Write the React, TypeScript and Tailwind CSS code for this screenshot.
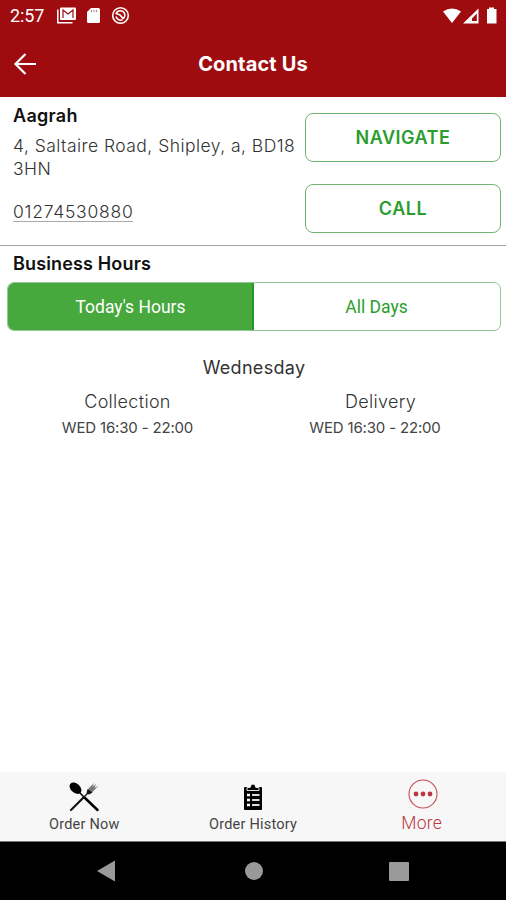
import React from "react";

const body = "font-['Inter','Liberation_Sans',sans-serif] whitespace-nowrap";
const roboto = "font-['Roboto','Liberation_Sans',sans-serif] whitespace-nowrap";

function StatusBar() {
  return (
    <div className="flex h-[31px] items-center px-[10px] text-white">
      <span className={`${roboto} w-[47px] text-[18px] leading-[31px] tracking-[-0.1px]`}>2:57</span>
      <svg className="h-[17px] w-[20px]" viewBox="0 0 20 17">
        <path d="M0.800 2.500V15.700H15.500" fill="none" stroke="#fff" strokeWidth="1.500" />
        <rect x="3" y="0.500" width="16" height="12.500" rx="1" fill="#fff" />
        <path d="M6 11V3L11 7L16 3V11" fill="none" stroke="#9e0c10" strokeWidth="1.200" />
      </svg>
      <svg className="ml-[9px] h-[17px] w-[15px]" viewBox="0 0 15 17">
        <path d="M5 1H12.500Q14 1 14 2.500V14.500Q14 16 12.500 16H2.500Q1 16 1 14.500V5Z" fill="#fff" />
        <path d="M5.500 3V5M8 3V5M10.500 3V5" stroke="#9e0c10" strokeWidth="0.900" opacity=".65" />
      </svg>
      <svg className="ml-[10px] h-[19px] w-[19px]" viewBox="0 0 19 19">
        <circle cx="9.500" cy="9.500" r="7.800" fill="none" stroke="#fff" strokeWidth="1.600" />
        <path d="M5.200 7.500C6.500 3.800 12 3.800 13.500 7.500C14.500 10 13 12 12 12.500L9 9C7.500 8 6 8 5.200 7.500Z" fill="none" stroke="#fff" strokeWidth="1.700" />
        <path d="M5 10.500C6 14 9 14.800 11.500 13.800" fill="none" stroke="#fff" strokeWidth="1.600" />
      </svg>
      <svg className="ml-auto h-[18px] w-[56px] translate-x-[2px]" viewBox="0 0 56 18">
        <path d="M1 4.500Q10 -1.500 19 4.500L10 16Z" fill="#fff" />
        <path d="M21 16.500L36.500 1.500V16.500ZM28.500 15H30V11.500L34.800 6.500V14H30V15Z" fill="#fff" fillRule="evenodd" />
        <path d="M45 2H47V0.500H52V2H54.500V16.500H45Z" fill="#fff" />
      </svg>
    </div>
  );
}

function Header() {
  return (
    <header className="h-[97px] bg-[#9e0c10]">
      <StatusBar />
      <div className="grid h-[65px] grid-cols-[70px_1fr_70px] items-center text-white">
        <svg className="ml-[13px] h-[24px] w-[24px]" viewBox="0 0 24 24" fill="none" stroke="#fff" strokeWidth="2.200">
          <path d="M12.500 2L2.500 12L12.500 22M2.500 12H23" />
        </svg>
        <h1 className={`${body} text-center text-[20px] leading-6 font-bold tracking-[0.15px]`}>Contact Us</h1>
      </div>
    </header>
  );
}

function OutlineButton({ children }: { children: React.ReactNode }) {
  return (
    <button className={`${body} h-[49px] w-[196px] rounded-[8px] border border-[#6fb574] text-[18px] font-semibold tracking-[0.5px] text-[#2a9d2d]`}>
      {children}
    </button>
  );
}

function Hours({ title, time }: { title: string; time: React.ReactNode }) {
  return (
    <div className="flex-1 text-center">
      <div className={`${body} pl-[2px] text-[18px] leading-[26px] font-light tracking-[0.3px] text-[#333]`}>{title}</div>
      {time}
    </div>
  );
}

export default function App() {
  return (
    <div className="flex h-[900px] w-[506px] flex-col overflow-hidden bg-white">
      <Header />
      <section className="flex h-[149px] justify-between border-b border-[#a0a0a0] pr-[5px] pl-[13px]">
        <div className="pt-[7px]">
          <h2 className={`${body} text-[18px] leading-6 font-semibold tracking-[0.3px] text-[#111]`}>Aagrah</h2>
          <p className={`${body} mt-[6px] text-[17.500px] leading-[23px] font-light tracking-[0.46px] text-[#333]`}>
            4, Saltaire Road, Shipley, a, BD18<br />3HN
          </p>
          <a className={`${body} mt-[22px] inline-block border-b border-[#aaa] text-[17.500px] leading-[19px] font-light tracking-[0.75px] text-[#333]`}>01274530880</a>
        </div>
        <div className="flex flex-col gap-[22px] pt-[16px]">
          <OutlineButton>NAVIGATE</OutlineButton>
          <OutlineButton>CALL</OutlineButton>
        </div>
      </section>
      <section>
        <h2 className={`${body} h-[36px] pl-[13px] text-[18px] leading-[36px] font-semibold tracking-[0.15px] text-[#111]`}>Business Hours</h2>
        <div className={`${roboto} mr-[5px] ml-[7px] flex h-[49px] overflow-hidden rounded-[7px] border border-[#93c797] text-center text-[17.500px] leading-[49px]`}>
          <div className="-m-px w-[247px] border-r-2 border-[#209d20] bg-[#47a83e] pt-px pl-[2px] text-white">Today's Hours</div>
          <div className="flex-1 text-[#2a9d2d]">All Days</div>
        </div>
        <div className={`${body} mt-[24px] pl-[2px] text-center text-[18px] leading-[26px] tracking-[0.3px] text-[#333]`}>Wednesday</div>
        <div className="mt-[8px] flex">
          <Hours
            title="Collection"
            time={<div className={`${body} pl-[2px] text-[15px] leading-[26px] tracking-[-0.17px] text-[#444]`}>WED 16:30 - 22:00</div>}
          />
          <Hours
            title="Delivery"
            time={<div className={`${body} pr-[9px] text-[15px] leading-[26px] tracking-[-0.17px] text-[#444]`}>WED 16:30 - 22:00</div>}
          />
        </div>
      </section>
      <nav className={`${roboto} mt-auto flex h-[70px] shrink-0 border-b border-[#777] bg-[#f7f7f7] text-[14.500px] tracking-[0.22px] text-[#444]`}>
        <div className="flex flex-1 flex-col items-center pt-[10px]">
          <svg className="h-[30px] w-[30px]" viewBox="0 0 30 30">
            <ellipse cx="6.500" cy="6.200" rx="6.800" ry="4.600" transform="rotate(42 6.500 6.200)" fill="#000" />
            <path d="M10 10L17 17" stroke="#000" strokeWidth="1.500" />
            <path d="M16 16L28.500 28" stroke="#000" strokeWidth="2.500" strokeLinecap="round" />
            <path d="M14 16L20 10" stroke="#222" strokeWidth="1.500" />
            <path d="M2 28L14.500 15.500" stroke="#111" strokeWidth="2.200" strokeLinecap="round" />
            <path d="M18 11L19.500 6.500L25 1L23.500 5L27 2L25.500 6L29.500 3.500L24 9.500L20.500 12Z" fill="#777" />
            <path d="M17.500 11.500L18.500 7L23.500 10.500L20 12.500Z" fill="#111" />
          </svg>
          <span className="mt-px leading-[24px]">Order Now</span>
        </div>
        <div className="flex flex-1 flex-col items-center pt-[10px]">
          <svg className="h-[30px] w-[18px]" viewBox="0 0 18 30">
            <rect x="0" y="5" width="18" height="23" rx="1" fill="#000" />
            <path d="M3 8.500V5.500H6.200Q6.500 2 9 2Q11.500 2 11.800 5.500H15V8.500Z" fill="#000" stroke="#f7f7f7" strokeWidth=".9" />
            <path d="M3 13H6M3 18H6M3 23H6" stroke="#fff" strokeWidth="2.600" />
            <path d="M8 13H15.500M8 18H15.500M8 23H15.500" stroke="#ddd" strokeWidth="1.800" />
          </svg>
          <span className="mt-px leading-[24px]">Order History</span>
        </div>
        <div className="flex flex-1 flex-col items-center pt-[7px] text-[17.500px] font-light text-[#b93642]">
          <svg className="h-[30px] w-[30px] translate-x-px" viewBox="0 0 30 30">
            <circle cx="15" cy="15" r="14" fill="none" stroke="#c64b56" strokeWidth="1.100" />
            <circle cx="8" cy="15" r="2.400" fill="#b93642" />
            <circle cx="15" cy="15" r="2.400" fill="#b93642" />
            <circle cx="22" cy="15" r="2.400" fill="#b93642" />
          </svg>
          <span className="leading-[28px]">More</span>
        </div>
      </nav>
      <div className="flex h-[58px] shrink-0 items-center justify-between bg-black pr-[97px] pl-[96px]">
        <svg className="h-[22px] w-[19px]" viewBox="0 0 19 22"><path d="M1 11L19 0.500V21.500Z" fill="#999" /></svg>
        <div className="h-[18px] w-[18px] translate-x-[2px] rounded-full bg-[#999]" />
        <div className="h-[19px] w-[20px] rounded-[1px] bg-[#999]" />
      </div>
    </div>
  );
}
